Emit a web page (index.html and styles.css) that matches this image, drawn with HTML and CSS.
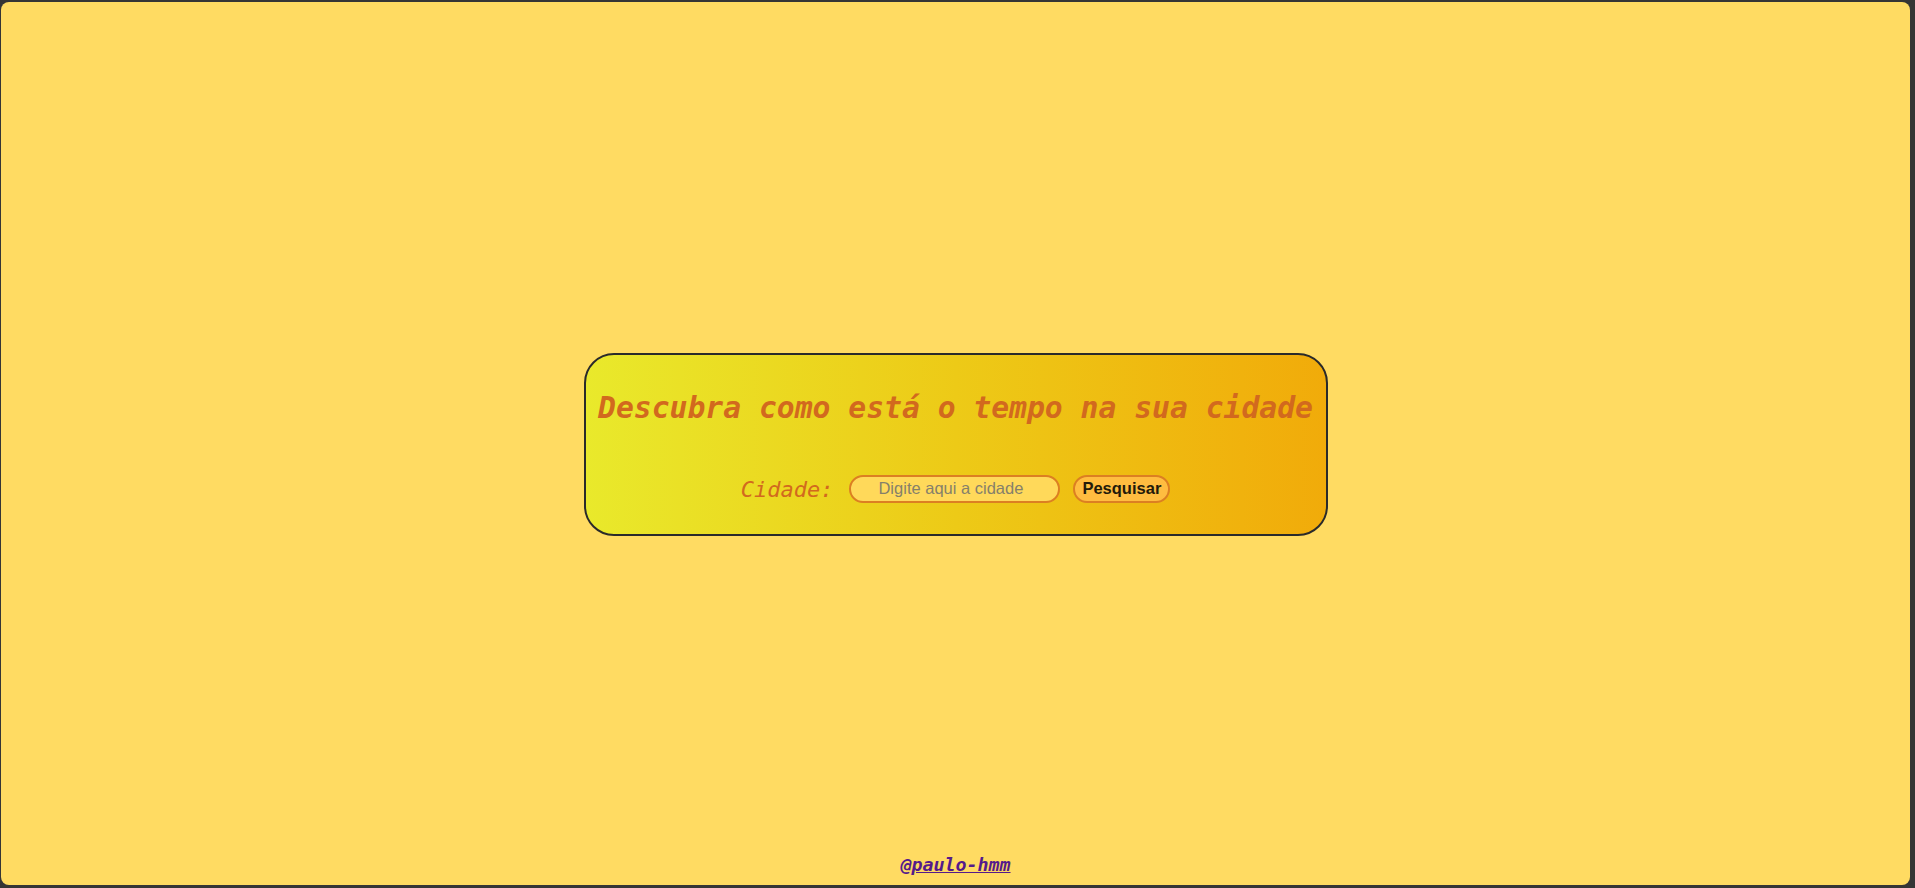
FILE: index.html
```html
<!DOCTYPE html>
<html lang="pt-BR">
<head>
<meta charset="utf-8">
<title>Previsão do tempo</title>
<link rel="stylesheet" href="styles.css">
</head>
<body>
<div class="spacer"></div>
<main class="card">
  <h1 class="title">Descubra como está o tempo na sua cidade</h1>
  <form class="search" onsubmit="return false">
    <label class="label" for="cidade">Cidade:</label>
    <input class="input" id="cidade" type="text" placeholder="Digite aqui a cidade">
    <button class="button" type="submit">Pesquisar</button>
  </form>
</main>
<footer class="footer">@<a class="link" href="#">paulo-hmm</a></footer>
</body>
</html>
```

FILE: styles.css
```css
html {
  height: 100%;
  background: #353535;
}

body {
  margin: 2px 5px 3px 1px;
  height: calc(100% - 5px);
  box-sizing: border-box;
  background: #ffdb62;
  border-radius: 8px;
  display: grid;
  grid-template-rows: 1fr auto 1fr;
  justify-items: center;
}

.card {
  width: 744px;
  box-sizing: border-box;
  margin-top: 2px;
  padding: 35px 12px 31px;
  border: 2px solid #2a2a2a;
  border-radius: 30px;
  background: linear-gradient(to right, #e9e92b, #edca17 50%, #f1ab0a);
  text-align: center;
}

.title {
  margin: 0;
  font-family: "DejaVu Sans Mono", monospace;
  font-style: italic;
  font-weight: bold;
  font-size: 29.7px;
  line-height: 35px;
  color: #d2691e;
  white-space: nowrap;
}

.search {
  margin-top: 50px;
  display: flex;
  justify-content: center;
  align-items: center;
}

.label {
  font-family: "DejaVu Sans Mono", monospace;
  font-style: italic;
  font-size: 22px;
  color: #d2691e;
  margin-right: 16px;
}

.input {
  width: 211px;
  height: 28px;
  box-sizing: border-box;
  border: 2px solid #dc7f22;
  border-radius: 14px;
  background: #ffd95a;
  font-family: "Liberation Sans", Arial, sans-serif;
  font-size: 16.5px;
  text-align: center;
  padding: 0 8px 1px 0;
  outline: none;
}

.input::placeholder {
  color: #85806a;
}

.button {
  margin-left: 13px;
  height: 28px;
  box-sizing: border-box;
  padding: 0 7px 1px;
  border: 2px solid #dc7f22;
  border-radius: 14px;
  background: #ffbd40;
  font-family: "Liberation Sans", Arial, sans-serif;
  font-weight: bold;
  font-size: 16.5px;
  color: #231a0a;
}

.footer {
  align-self: end;
  padding-bottom: 10px;
  font-family: "DejaVu Sans Mono", monospace;
  font-style: italic;
  font-weight: bold;
  font-size: 18.3px;
  line-height: 21px;
  color: #551a8b;
}

.link {
  color: #551a8b;
}
```
